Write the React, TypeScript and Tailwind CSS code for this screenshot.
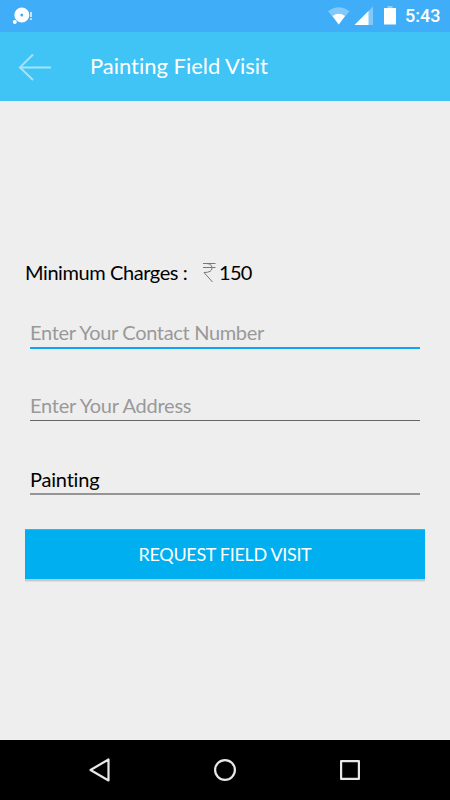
import React from 'react';

// ─── Status bar ───────────────────────────────────────────────────────────────
function StatusBar() {
  return (
    <div className="flex h-8 items-center justify-between bg-[#3fadf7] pl-3 pr-2.5">
      <svg width={22} height={32} viewBox="12 0 22 32">
        <circle cx={21.8} cy={15} r={4.5} fill="none" stroke="#fff" strokeWidth={6} />
        <circle cx={14.8} cy={22} r={2} fill="#fff" />
        <path d="M31 12v5M31 18.2v1.8" stroke="#fff" strokeOpacity={0.85} strokeWidth={1.6} />
      </svg>
      <div className="flex items-center">
        <svg width={72} height={32} viewBox="326 0 72 32">
          <path d="M328 11.3Q338.700 3 349.500 11.300L338.700 24.500Z" fill="#fff" fillOpacity={0.35} />
          <path d="M332.600 16Q338.700 11.500 345 16L338.700 24.500Z" fill="#fff" />
          <path d="M373 6.500V25H354.500Z" fill="#fff" fillOpacity={0.35} />
          <path d="M368.500 11V25H354.500Z" fill="#fff" />
          <path d="M387.500 6h5v2h-5z" fill="#fff" fillOpacity={0.4} />
          <path d="M384 8h12v16.500h-12z" fill="#fff" />
        </svg>
        <span className="ml-[7px] w-[35px] whitespace-nowrap font-['Roboto',sans-serif] text-[18px] font-medium leading-8 text-white">5:43</span>
      </div>
    </div>
  );
}

// ─── App bar ──────────────────────────────────────────────────────────────────
function AppBar({ title }: { title: string }) {
  return (
    <header className="flex h-[69px] items-center bg-[#3fc4f5] pl-[18px]">
      <svg width={34} height={28} viewBox="18 53 34 28" fill="none" stroke="#a5e3fa" strokeWidth={2}>
        <path d="M51 67.400H20M33 54.500L20 67.400L33 80" />
      </svg>
      <h1 className="ml-[38px] pb-[2px] text-[22px] leading-[67px] tracking-[-0.02px] text-white">{title}</h1>
    </header>
  );
}

function Rupee() {
  return (
    <svg className="mt-px" width={15} height={22} viewBox="0 0 15 22" fill="none" stroke="#777" strokeWidth={1}>
      <path d="M1 1.500H13.500M1 5.500H13.500M1 1.500H5Q10 2 10 6Q10 10.500 2 10.500L10.500 20" />
    </svg>
  );
}

// ─── Form field ───────────────────────────────────────────────────────────────
const tones = {
  active: { text: 'text-[#999] pt-px tracking-[-0.33px]', line: 'h-[2px] bg-[#0ba7f5]' },
  hint: { text: 'text-[#999] pt-px tracking-[-0.25px]', line: 'h-px bg-[#666]' },
  filled: { text: 'text-black pt-[2px] tracking-[-0.2px]', line: 'h-[2px] bg-[#959595]' },
};

function Field({ text, tone }: { text: string; tone: keyof typeof tones }) {
  return (
    <div className="h-[73px] px-[5px]">
      <div className={`h-[31px] text-[20px] leading-[31px] ${tones[tone].text}`}>{text}</div>
      <div className={tones[tone].line} />
    </div>
  );
}

// ─── Navigation bar ───────────────────────────────────────────────────────────
function NavBar() {
  return (
    <nav className="flex h-[60px] items-center justify-center gap-[101px] bg-black">
      <svg width={24} height={26} viewBox="0 0 24 26" fill="none" stroke="#e8e8e8" strokeWidth={2.2} strokeLinejoin="round">
        <path d="M20.500 2.500V23.500L2.500 13Z" />
      </svg>
      <svg width={24} height={24} viewBox="0 0 24 24" fill="none" stroke="#e8e8e8" strokeWidth={2.2}>
        <circle cx={12} cy={12} r={9.900} />
      </svg>
      <svg width={24} height={24} viewBox="0 0 24 24" fill="none" stroke="#e8e8e8" strokeWidth={2.2} strokeLinejoin="round">
        <path d="M3.100 3.100h17.800v17.800H3.100z" />
      </svg>
    </nav>
  );
}

export default function App() {
  return (
    <div className="flex h-[800px] w-[450px] flex-col overflow-hidden bg-[#eee] font-['Lato',sans-serif]">
      <StatusBar />
      <AppBar title="Painting Field Visit" />
      <main className="flex-1 px-[25px] pt-[156px]">
        <div className="flex h-[30px] items-center text-[20px] leading-[30px] tracking-[-0.42px] text-black">
          <span className="w-[177px] whitespace-nowrap">Minimum Charges :</span>
          <Rupee />
          <span className="ml-[2px] tracking-[-0.7px]">150</span>
        </div>
        <div className="pt-[29px]">
          <Field text="Enter Your Contact Number" tone="active" />
          <Field text="Enter Your Address" tone="hint" />
          <Field text="Painting" tone="filled" />
        </div>
        <button className="-mt-[6px] block h-[50px] w-full border-t border-[#4aaedb] bg-[#00aff0] text-center text-[18px] tracking-[-0.33px] text-white shadow-[0_2px_0_#c9c9c9,0_3px_0_#dfdfdf]">
          REQUEST FIELD VISIT
        </button>
      </main>
      <NavBar />
    </div>
  );
}
